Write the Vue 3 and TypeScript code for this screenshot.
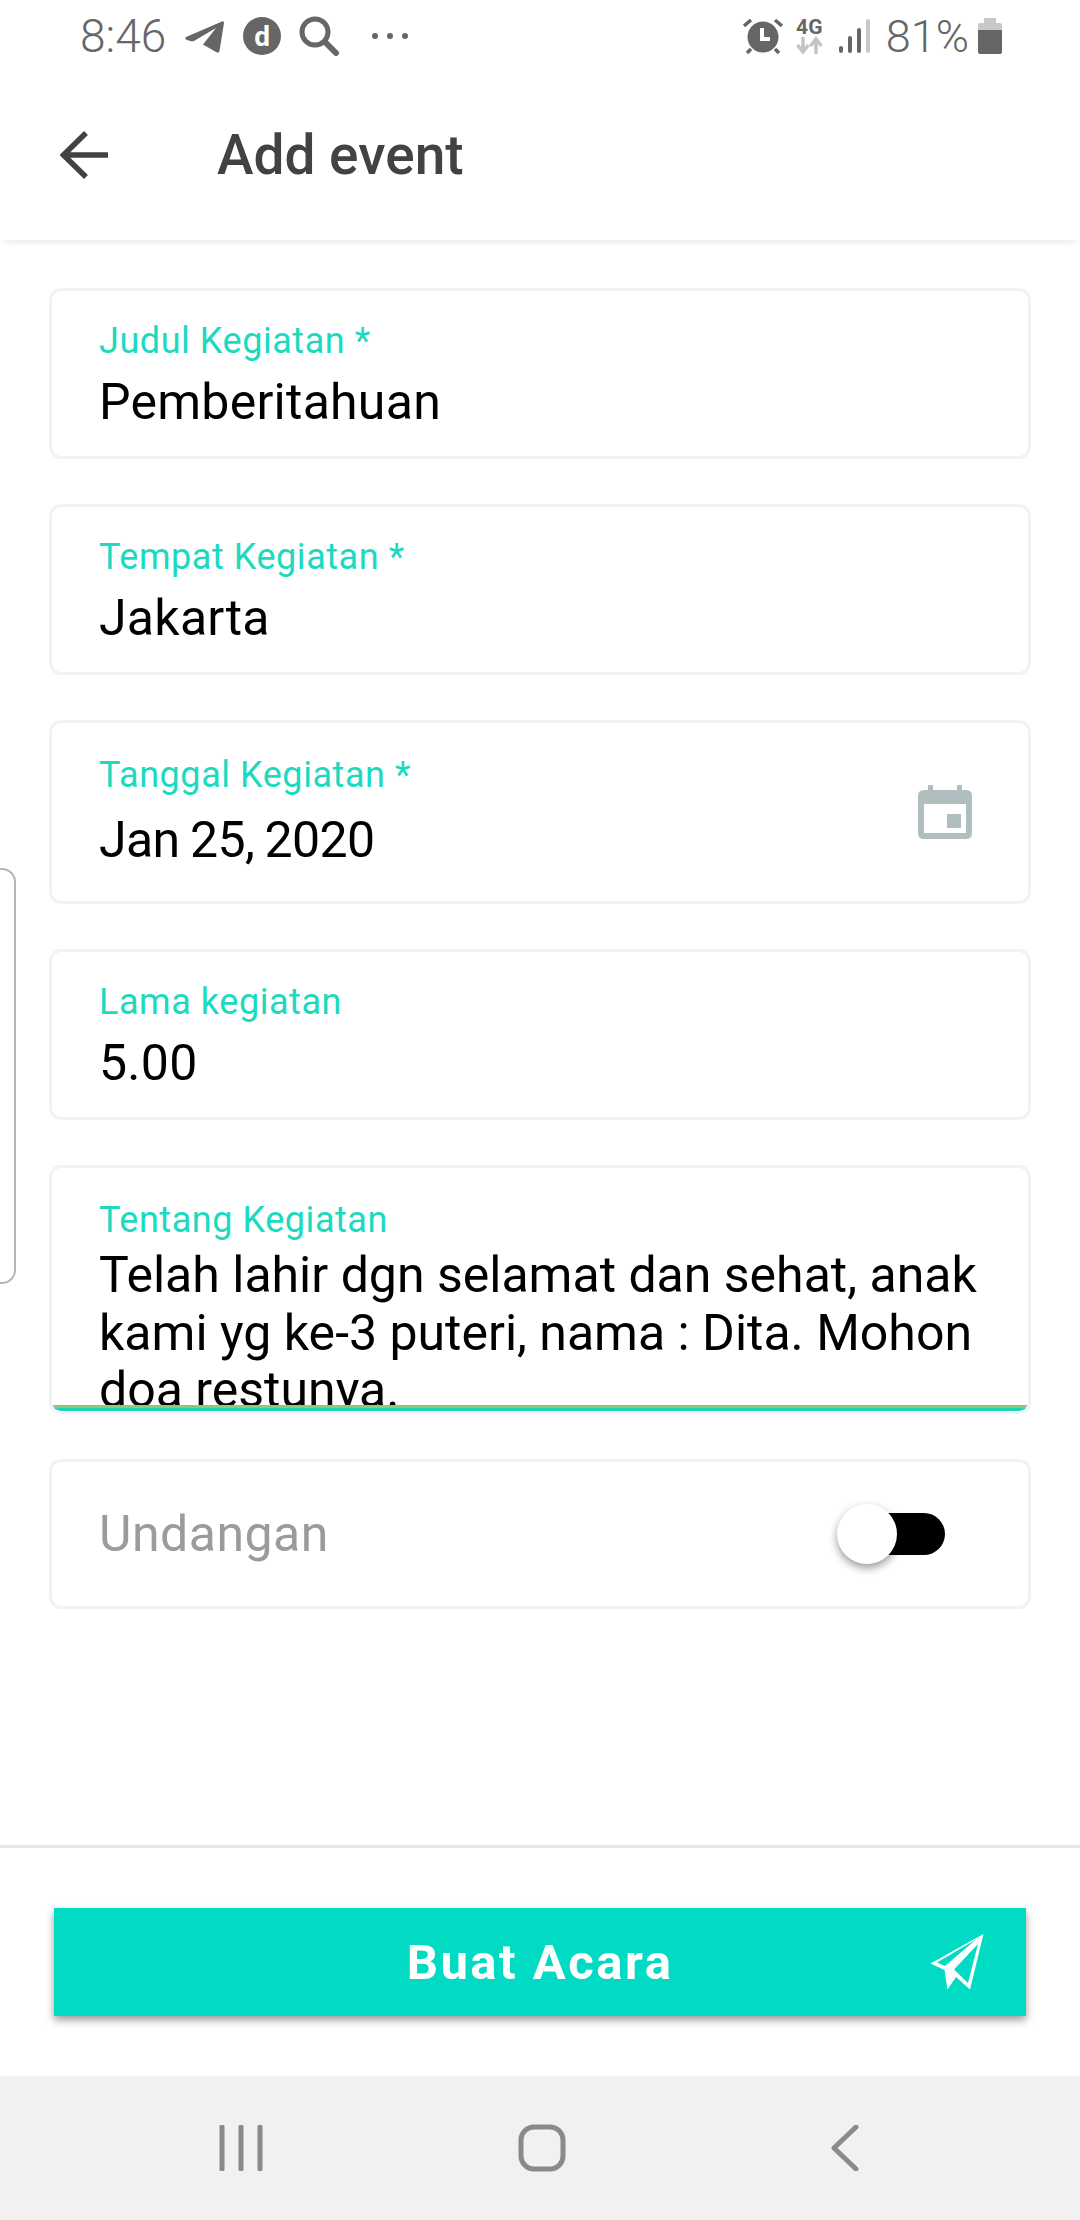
<script setup lang="ts">
interface Field { label: string; value: string; kind: string }
const fields: Field[] = [
  { label: 'Judul Kegiatan *', value: 'Pemberitahuan', kind: 'plain' },
  { label: 'Tempat Kegiatan *', value: 'Jakarta', kind: 'plain' },
  { label: 'Tanggal Kegiatan *', value: 'Jan 25, 2020', kind: 'date' },
  { label: 'Lama kegiatan', value: '5.00', kind: 'plain' },
]
</script>

<template>
  <div class="screen">
    <div class="statusbar">
      <div class="status-left">
        <span class="time">8:46</span>
        <svg class="i-tg" width="39" height="33" viewBox="0 0 39 33"><path d="M1 17 37 1.500Q39 .5 39 3L34.500 31Q34 33.500 31 32L18 24.500 31 8 9 21Q7 21.700 5 21L1 19.500Q-.5 18 1 17Z" fill="#666"/></svg>
        <span class="d-badge"><span>d</span></span>
        <svg class="i-search" width="40" height="40" viewBox="0 0 40 40"><circle cx="16" cy="16" r="13" fill="none" stroke="#666" stroke-width="5"/><path d="M26 26 37 37" stroke="#666" stroke-width="6" stroke-linecap="round"/></svg>
        <span class="dots"><i></i><i></i><i></i></span>
      </div>
      <div class="status-right">
        <svg width="40" height="36" viewBox="0 0 40 36"><circle cx="20" cy="19" r="15.500" fill="#666"/><path d="M1 8 8 2M39 8 32 2M8 31 4 35M32 31 36 35" stroke="#666" stroke-width="3.500"/><path d="M19 10V21H27" fill="none" stroke="#fff" stroke-width="4"/></svg>
        <span class="net"><b>4G</b>
          <svg width="27" height="17" viewBox="0 0 27 17"><path d="M7 0V13M1.500 8 7 15 12.500 8M20 17V4M14.500 9 20 2 25.500 9" fill="none" stroke="#c4c4c4" stroke-width="3.500"/></svg>
        </span>
        <svg width="32" height="34" viewBox="0 0 32 34"><rect x="0" y="27" width="4" height="7" rx="2" fill="#666"/><rect x="9" y="17" width="4" height="17" rx="2" fill="#666"/><rect x="18" y="9" width="4" height="25" rx="2" fill="#666"/><rect x="27" y="0" width="4" height="34" rx="2" fill="#c8c8c8"/></svg>
        <span class="pct">81%</span>
        <svg width="24" height="36" viewBox="0 0 24 36"><path d="M6 0H18V5H22Q24 5 24 7V12H0V7Q0 5 2 5H6Z" fill="#c8c8c8"/><path d="M0 12H24V34Q24 36 22 36H2Q0 36 0 34Z" fill="#666"/></svg>
      </div>
    </div>

    <header class="appbar">
      <svg class="back" width="48" height="48" viewBox="0 0 48 48"><path d="M49 24H4M26 2 3.500 24 26 46" fill="none" stroke="#424242" stroke-width="5.500"/></svg>
      <h1>Add event</h1>
    </header>

    <main class="form">
      <div v-for="f in fields" :key="f.label" class="card" :class="f.kind">
        <div>
          <div class="label">{{ f.label }}</div>
          <div class="value">{{ f.value }}</div>
        </div>
        <svg v-if="f.kind === 'date'" class="cal" width="54" height="54" viewBox="0 0 54 54"><path d="M10 0h5v5h24V0h5v5h4q6 0 6 6v37q0 6-6 6H6q-6 0-6-6V11q0-6 6-6h4ZM6 19v29h42V19Z" fill="#b0bec0" fill-rule="evenodd"/><rect x="29" y="29" width="14" height="14" fill="#b0bec0"/></svg>
      </div>

      <div class="card about">
        <div class="label">Tentang Kegiatan</div>
        <div class="long">Telah lahir dgn selamat dan sehat, anak<br>kami yg ke-3 puteri, nama : Dita. Mohon<br>doa restunya.</div>
        <div class="underline"></div>
      </div>

      <div class="card invite">
        <span class="muted">Undangan</span>
        <span class="toggle"><i></i></span>
      </div>
    </main>

    <div class="side-tab"></div>

    <footer class="foot">
      <button class="submit" type="button">
        <span>Buat Acara</span>
        <svg class="send" width="54" height="57" viewBox="0 0 54 57"><path fill-rule="evenodd" fill="#fff" d="M53.500 1 .5 30.500 14.500 37 17.500 56.500 26 44 40 56.500ZM46 6.500 7 29.500 15 33ZM48 11 24 36.500 38 50Z"/></svg>
      </button>
    </footer>

    <nav class="navbar">
      <svg width="44" height="46" viewBox="0 0 44 46"><path d="M3 2V44M22 2V44M41 2V44" stroke="#8a8a8a" stroke-width="5" stroke-linecap="round"/></svg>
      <svg width="48" height="48" viewBox="0 0 48 48"><rect x="3" y="3" width="42" height="42" rx="13" fill="none" stroke="#8a8a8a" stroke-width="5"/></svg>
      <svg width="28" height="46" viewBox="0 0 28 46"><path d="M25 2 3 23 25 44" fill="none" stroke="#8a8a8a" stroke-width="5" stroke-linecap="round" stroke-linejoin="round"/></svg>
    </nav>
  </div>
</template>

<style>
html, body { margin: 0; background: #fff; }
</style>

<style scoped>
.screen {
  position: relative;
  width: 1080px;
  height: 2220px;
  overflow: hidden;
  display: flex;
  flex-direction: column;
  background: #fff;
  font-family: Roboto, "Liberation Sans", sans-serif;
}
.statusbar {
  height: 70px;
  flex: none;
  display: flex;
  justify-content: space-between;
  align-items: center;
  padding: 2px 78px 0 80px;
  box-sizing: border-box;
  color: #666;
}
.status-left, .status-right { display: flex; align-items: center; }
.time { font-size: 46px; font-weight: 300; margin-right: 19px; }
.d-badge {
  width: 38px; height: 38px; border-radius: 50%; background: #666; margin-left: 19px;
  display: flex; align-items: center; justify-content: center;
  color: #fff; font-size: 28px; font-weight: 700;
}
.i-search { margin-left: 18px; }
.dots { display: flex; gap: 9px; margin-left: 33px; }
.dots i { width: 6px; height: 6px; border-radius: 50%; background: #666; }
.status-right svg { display: block; }
.net { display: flex; flex-direction: column; align-items: center; margin: 0 16px 0 13px; }
.net b { font-size: 21px; line-height: 19px; font-weight: 700; }
.pct { font-size: 45px; font-weight: 300; margin: 0 9px 0 15px; }

.appbar {
  height: 170px;
  flex: none;
  display: flex;
  align-items: center;
  padding: 0 0 0 60px;
  box-sizing: border-box;
  box-shadow: 0 6px 7px -4px rgba(0, 0, 0, .1);
  position: relative;
}
.appbar h1 {
  margin: 0 0 0 109px;
  font-size: 55px;
  font-weight: 500;
  color: #424242;
}
.form {
  flex: 1;
  display: flex;
  flex-direction: column;
  gap: 45px;
  padding: 48px 49px 0;
}
.card {
  flex: none;
  box-sizing: border-box;
  height: 171px;
  border: 3px solid #eff3f4;
  border-radius: 12px;
  padding: 28px 47px 0;
  position: relative;
  display: flex;
  justify-content: space-between;
  overflow: hidden;
}
.card.date { height: 184px; padding-top: 30px; }
.label { font-size: 36px; line-height: 44px; color: #1cdac0; letter-spacing: .55px; }
.value { font-size: 50px; line-height: 60px; color: #000; margin-top: 9px; letter-spacing: .25px; }
.date .value { margin-top: 13px; letter-spacing: -.6px; word-spacing: -1.500px; }
.cal { margin: 32px 9px 0 0; }
.card.about { height: 249px; display: block; padding-top: 30px; }
.long { font-size: 50px; line-height: 57.500px; color: #000; white-space: nowrap; margin-top: 5px; }
.underline {
  position: absolute; left: 0; right: 0; bottom: 0; height: 6px;
  background: linear-gradient(#8cca78 50%, #1fd4b4 50%);
}
.card.invite { height: 150px; padding: 0 83px 0 47px; align-items: center; overflow: visible; }
.muted { font-size: 50px; color: #9b9b9b; letter-spacing: .5px; }
.toggle { position: relative; width: 108px; height: 42px; display: block; }
.toggle::before {
  content: ""; position: absolute; left: 26px; right: 0; top: 0; bottom: 0;
  background: #000; border-radius: 21px;
}
.toggle i {
  position: absolute; left: 0; top: -9px; width: 60px; height: 60px; border-radius: 50%;
  background: #fff; box-shadow: 0 4px 8px rgba(0, 0, 0, .4);
}
.side-tab {
  position: absolute; left: -20px; top: 868px; width: 32px; height: 412px;
  border: 2px solid #b5b5b5; border-radius: 14px; background: #fff;
}
.foot {
  flex: none;
  height: 231px;
  box-sizing: border-box;
  border-top: 3px solid #e6e6e6;
  padding: 60px 54px 0;
}
.submit {
  position: relative;
  display: flex; align-items: center; justify-content: center;
  width: 100%; height: 108px;
  border: 0; padding: 0;
  background: #02dbc4;
  color: #fff;
  font-family: Roboto, sans-serif;
  font-size: 49px; font-weight: 700; letter-spacing: 2.500px;
  box-shadow: 0 4px 8px rgba(0, 0, 0, .4);
}
.send { position: absolute; right: 42px; top: 25px; }
.navbar {
  flex: none;
  height: 144px;
  background: #f1f1f1;
  position: relative;
  display: grid;
  grid-template-columns: 480px 200px 1fr;
  align-items: center;
}
.navbar svg:nth-child(1) { margin-left: 219px; }
.navbar svg:nth-child(2) { margin-left: 38px; }
.navbar svg:nth-child(3) { margin-left: 151px; }
</style>
